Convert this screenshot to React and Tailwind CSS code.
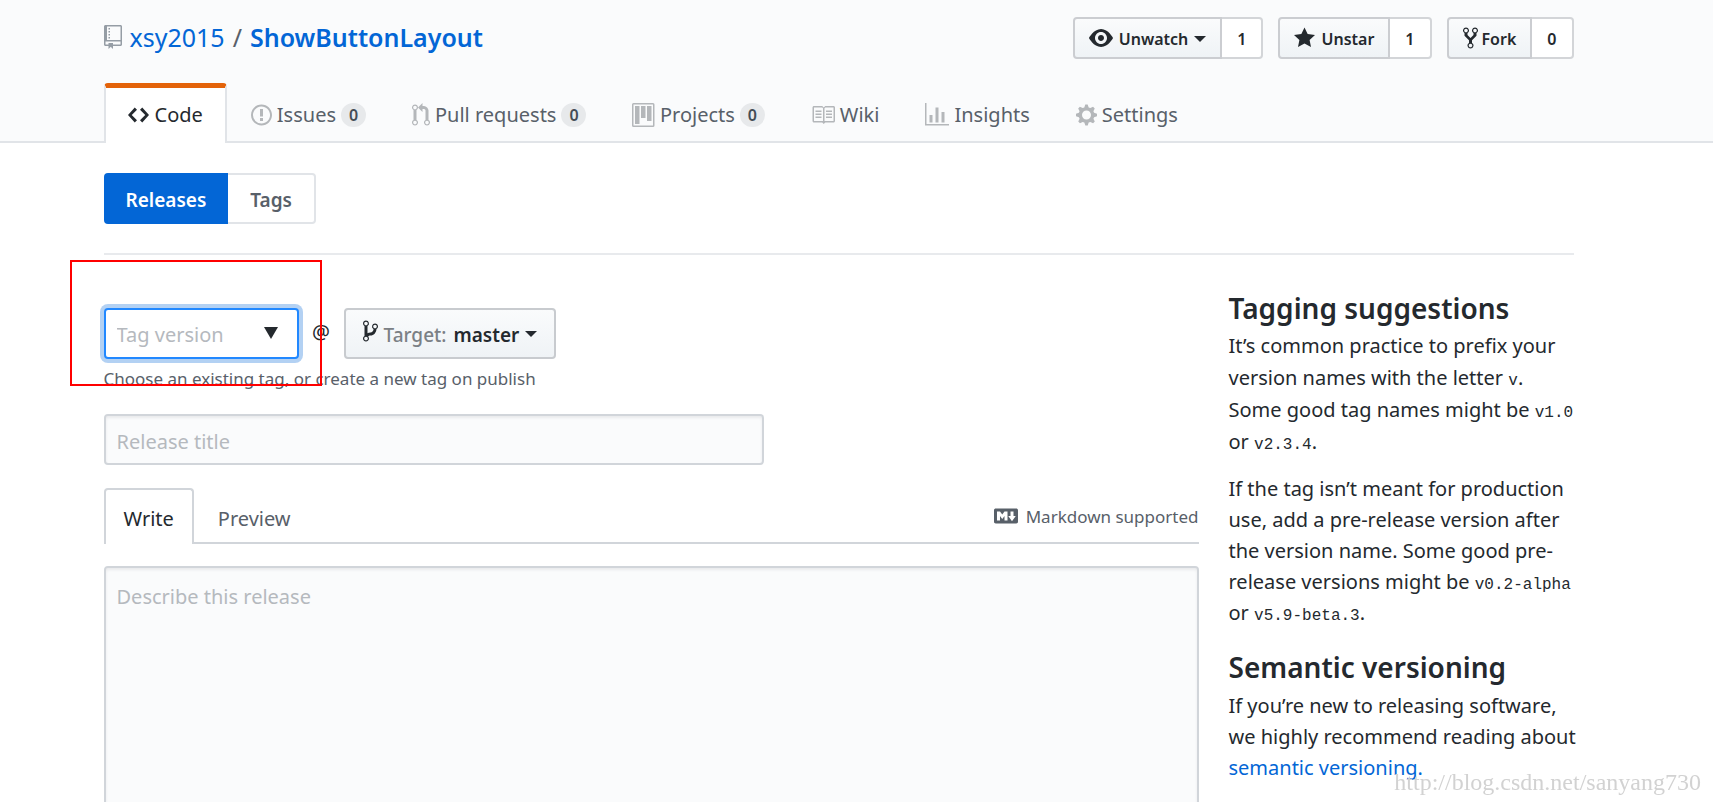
import React from "react";

const ICONS = {
  repo: [12, "M4 9H3V8h1v1zm0-3H3v1h1V6zm0-2H3v1h1V4zm0-2H3v1h1V2zm8-1v12c0 .55-.45 1-1 1H6v2l-1.5-1.5L3 16v-2H1c-.55 0-1-.45-1-1V1c0-.55.45-1 1-1h10c.55 0 1 .45 1 1zm-1 10H1v2h2v-1h3v1h5v-2zm0-10H2v9h9V1z"],
  eye: [16, "M8.06 2C3 2 0 8 0 8s3 6 8.06 6C13 14 16 8 16 8s-3-6-7.94-6zM8 12c-2.2 0-4-1.78-4-4 0-2.2 1.8-4 4-4 2.22 0 4 1.8 4 4 0 2.22-1.78 4-4 4zm2-4c0 1.11-.89 2-2 2-1.11 0-2-.89-2-2 0-1.11.89-2 2-2 1.11 0 2 .89 2 2z"],
  star: [14, "M14 6l-4.9-.64L7 1 4.9 5.36 0 6l3.6 3.26L2.67 14 7 11.67 11.33 14l-.93-4.74z"],
  fork: [10, "M8 1a1.993 1.993 0 0 0-1 3.72V6L5 8 3 6V4.72A1.993 1.993 0 0 0 2 1a1.993 1.993 0 0 0-1 3.72V6.5l3 3v1.78A1.993 1.993 0 0 0 5 15a1.993 1.993 0 0 0 1-3.72V9.5l3-3V4.72A1.993 1.993 0 0 0 8 1zM2 4.2C1.34 4.2.8 3.65.8 3c0-.65.55-1.2 1.2-1.2.65 0 1.2.55 1.2 1.2 0 .65-.55 1.2-1.2 1.2zm3 10c-.66 0-1.2-.55-1.2-1.2 0-.65.55-1.2 1.2-1.2.65 0 1.2.55 1.2 1.2 0 .65-.55 1.2-1.2 1.2zm3-10c-.66 0-1.2-.55-1.2-1.2 0-.65.55-1.2 1.2-1.2.65 0 1.2.55 1.2 1.2 0 .65-.55 1.2-1.2 1.2z"],
  code: [14, "M9.5 3L8 4.5 11.5 8 8 11.5 9.5 13 14 8 9.5 3zm-5 0L0 8l4.5 5L6 11.5 2.5 8 6 4.5 4.5 3z"],
  issue: [14, "M7 2.3c3.14 0 5.7 2.56 5.7 5.7s-2.56 5.7-5.7 5.7A5.71 5.71 0 0 1 1.3 8c0-3.14 2.56-5.7 5.7-5.7zM7 1C3.14 1 0 4.14 0 8s3.14 7 7 7 7-3.14 7-7-3.14-7-7-7zm1 3H6v5h2V4zm0 6H6v2h2v-2z"],
  pull: [12, "M11 11.28V5c-.03-.78-.34-1.47-.94-2.06C9.46 2.35 8.78 2.03 8 2H7V0L4 3l3 3V4h1c.27.02.48.11.69.31.21.2.3.42.31.69v6.28A1.993 1.993 0 0 0 10 15a1.993 1.993 0 0 0 1-3.72zm-1 2.92c-.66 0-1.2-.55-1.2-1.2 0-.65.55-1.2 1.2-1.2.65 0 1.2.55 1.2 1.2 0 .65-.55 1.2-1.2 1.2zM4 3c0-1.11-.89-2-2-2a1.993 1.993 0 0 0-1 3.72v6.56A1.993 1.993 0 0 0 2 15a1.993 1.993 0 0 0 1-3.72V4.72c.59-.34 1-.98 1-1.72zm-.8 10c0 .66-.55 1.2-1.2 1.2-.65 0-1.2-.55-1.2-1.2 0-.65.55-1.2 1.2-1.2.65 0 1.2.55 1.2 1.2zM2 4.2C1.34 4.2.8 3.65.8 3c0-.65.55-1.2 1.2-1.2.65 0 1.2.55 1.2 1.2 0 .65-.55 1.2-1.2 1.2z"],
  project: [15, "M10 12h3V2h-3v10zm-4-2h3V2H6v8zm-4 4h3V2H2v12zm-1 1h13V1H1v14zM14 0H1a1 1 0 0 0-1 1v14a1 1 0 0 0 1 1h13a1 1 0 0 0 1-1V1a1 1 0 0 0-1-1z"],
  book: [16, "M3 5h4v1H3V5zm0 3h4V7H3v1zm0 2h4V9H3v1zm11-5h-4v1h4V5zm0 2h-4v1h4V7zm0 2h-4v1h4V9zm2-6v9c0 .55-.45 1-1 1H9.5l-1 1-1-1H2c-.55 0-1-.45-1-1V3c0-.55.45-1 1-1h5.5l1 1 1-1H15c.55 0 1 .45 1 1zm-8 .5L7.5 3H2v9h6V3.5zm7-.5H9.5l-.5.5V12h6V3z"],
  graph: [16, "M16 14v1H0V0h1v14h15zM5 13H3V8h2v5zm4 0H7V3h2v10zm4 0h-2V6h2v7z"],
  gear: [14, "M14 8.77v-1.6l-1.94-.64-.45-1.09.88-1.84-1.13-1.13-1.81.91-1.09-.45-.69-1.92h-1.6l-.63 1.94-1.11.45-1.84-.88-1.13 1.13.91 1.81-.45 1.09L0 7.23v1.59l1.94.64.45 1.09-.88 1.84 1.13 1.13 1.81-.91 1.09.45.69 1.92h1.59l.63-1.94 1.11-.45 1.84.88 1.13-1.13-.92-1.81.47-1.09L14 8.75v.02zM7 11c-1.66 0-3-1.34-3-3s1.34-3 3-3 3 1.34 3 3-1.34 3-3 3z"],
  branch: [10, "M10 5c0-1.11-.89-2-2-2a1.993 1.993 0 0 0-1 3.72v.3c-.02.52-.23.98-.63 1.38-.4.4-.86.61-1.38.63-.83.02-1.48.16-2 .45V4.72a1.993 1.993 0 0 0-1-3.72C.88 1 0 1.89 0 3a2 2 0 0 0 1 1.72v6.56c-.59.35-1 .99-1 1.72 0 1.11.89 2 2 2 1.11 0 2-.89 2-2 0-.53-.2-1-.53-1.36.09-.06.48-.41.59-.47.25-.11.56-.17.94-.17 1.05-.05 1.95-.45 2.75-1.25S8.95 7.77 9 6.73h-.02C9.59 6.37 10 5.73 10 5zM2 1.8c.66 0 1.2.55 1.2 1.2 0 .65-.55 1.2-1.2 1.2C1.35 4.2.8 3.65.8 3c0-.65.55-1.2 1.2-1.2zm0 12.41c-.66 0-1.2-.55-1.2-1.2 0-.65.55-1.2 1.2-1.2.65 0 1.2.55 1.2 1.2 0 .65-.55 1.2-1.2 1.2zm6-8c-.66 0-1.2-.55-1.2-1.2 0-.65.55-1.2 1.2-1.2.65 0 1.2.55 1.2 1.2 0 .65-.55 1.2-1.2 1.2z"],
  markdown: [16, "M14.85 3H1.15C.52 3 0 3.52 0 4.15v7.69C0 12.48.52 13 1.15 13h13.69c.64 0 1.15-.52 1.15-1.15v-7.7C16 3.52 15.48 3 14.85 3zM9 11H7V8L5.5 9.92 4 8v3H2V5h2l1.5 2L7 5h2v6zm2.99.5L9.5 8H11V5h2v3h1.5l-2.51 3.5z"],
};

function Icon({ name, className = "" }) {
  const [w, d] = ICONS[name];
  return (
    <svg aria-hidden="true" viewBox={`0 0 ${w} 16`} width={w * 1.5} height="24" className={`shrink-0 fill-current ${className}`}>
      <path fillRule="evenodd" d={d} />
    </svg>
  );
}

function Caret() {
  return (
    <svg aria-hidden="true" viewBox="0 0 12 6" width="12" height="6" className="ml-1.5 shrink-0 fill-current">
      <path d="M0 0h12L6 6z" />
    </svg>
  );
}

function SocialButton({ icon, label, count, caret, tight }) {
  return (
    <div className="flex h-[42px] text-base font-semibold text-[#24292e]">
      <button
        type="button"
        className={`flex items-center rounded-l border-2 border-[#cbcdd1] bg-linear-to-b from-[#fafbfc] to-[#eff3f6] px-3.5 ${tight ? "gap-1" : "gap-1.5"}`}
      >
        <Icon name={icon} />
        <span className="flex items-center pt-0.5">
          {label}
          {caret && <Caret />}
        </span>
      </button>
      <a href="#count" className="flex items-center rounded-r border-2 border-l-0 border-[#d3d5d8] bg-white px-[15px] pt-0.5">
        {count}
      </a>
    </div>
  );
}

const TABS = [
  { icon: "issue", label: "Issues", count: 0 },
  { icon: "pull", label: "Pull requests", count: 0 },
  { icon: "project", label: "Projects", count: 0 },
  { icon: "book", label: "Wiki" },
  { icon: "graph", label: "Insights" },
  { icon: "gear", label: "Settings" },
];

function RepoHeader() {
  return (
    <header className="border-b-2 border-[#e1e4e8] bg-[#fafbfc] pr-9">
      <div className="mx-auto max-w-[1470px]">
        <div className="flex items-start justify-between pt-[17px]">
          <h1 className="flex items-center text-[25px] leading-10 text-[#586069]">
            <Icon name="repo" className="mr-2 text-[#959da5]" />
            <a href="#owner" className="text-[#0366d6]">xsy2015</a>
            <span className="mx-2">/</span>
            <a href="#repo" className="font-semibold text-[#0366d6]">ShowButtonLayout</a>
          </h1>
          <div className="flex gap-[15px]">
            <SocialButton icon="eye" label="Unwatch" count="1" caret />
            <SocialButton icon="star" label="Unstar" count="1" />
            <SocialButton icon="fork" label="Fork" count="0" tight />
          </div>
        </div>
        <nav aria-label="Repository" className="-mb-0.5 mt-6 flex h-[60px] text-xl text-[#586069]">
          <a
            href="#code"
            className="flex items-center gap-1.5 rounded-t border-x-2 border-t-[5px] border-x-[#e1e4e8] border-t-[#e36209] bg-white px-[22px] pb-0.5 text-[#24292e]"
          >
            <Icon name="code" />
            Code
          </a>
          <div className="flex items-center gap-[46px] pl-6 pt-1">
            {TABS.map((t) => (
              <a key={t.label} href={`#${t.icon}`} className="flex items-center gap-[5px]">
                <Icon name={t.icon} className="text-[#b4b7ba]" />
                {t.label}
                {t.count !== undefined && (
                  <span className="flex h-6 w-[25px] items-center justify-center rounded-full bg-[#e7e9eb] text-base font-semibold text-[#444d56]">
                    {t.count}
                  </span>
                )}
              </a>
            ))}
          </div>
        </nav>
      </div>
    </header>
  );
}

function ReleaseForm() {
  return (
    <form className="relative min-w-0 flex-1">
      <div className="flex items-center">
        <div className="relative w-[195px]">
          <input
            aria-label="Tag version"
            placeholder="Tag version"
            className="block h-[51px] w-full rounded border-2 border-[#2188ff] bg-white pl-[11px] pr-10 pt-0.5 text-xl shadow-[0_0_0_4px_rgba(3,102,214,0.3)] outline-none placeholder:text-[#b5b9be]"
          />
          <svg aria-hidden="true" viewBox="0 0 14 12" width="14" height="12" className="absolute right-[21px] top-[19px] fill-[#24292e]">
            <path d="M0 0h14L7 12z" />
          </svg>
        </div>
        <span className="w-[45px] pb-1 text-center text-xl">@</span>
        <button
          type="button"
          className="flex h-[51px] items-center rounded border-2 border-[#c8cbcf] bg-linear-to-b from-[#fafbfc] to-[#eff3f6] px-[17px] text-[19px] font-semibold"
        >
          <Icon name="branch" className="mb-1.5 mr-1.5" />
          <span className="mr-[7px] pt-1 font-medium text-[#7b8085]">Target:</span>
          <span className="pt-1">master</span>
          <Caret />
        </button>
      </div>
      <p className="mt-1.5 text-[17px] leading-[27px] text-[#586069]">
        Choose an existing tag, or create a new tag on publish
      </p>
      <div aria-hidden="true" className="pointer-events-none absolute -left-[34px] -top-12 h-[126px] w-[252px] border-2 border-[#ff0000]" />
      <input
        aria-label="Release title"
        placeholder="Release title"
        className="mt-[22px] block h-[51px] w-[660px] max-w-full rounded border-2 border-[#d1d5da] bg-[#fafbfc] px-[11px] pt-1 text-xl shadow-[inset_0_2px_3px_rgba(27,31,35,0.075)] placeholder:text-[#b5b9be]"
      />
      <div className="mt-[23px] flex h-14 items-stretch border-b-2 border-[#d1d5da] text-xl">
        <button type="button" className="-mb-0.5 rounded-t border-2 border-b-0 border-[#d1d5da] bg-white px-[18px] pt-1 text-[#24292e]">
          Write
        </button>
        <button type="button" className="px-6 pt-2 text-[#586069]">Preview</button>
        <a href="#markdown" className="ml-auto flex items-center gap-2 pt-0.5 text-[17px] text-[#586069]">
          <Icon name="markdown" />
          <span className="pt-0.5">Markdown supported</span>
        </a>
      </div>
      <textarea
        aria-label="Describe this release"
        placeholder="Describe this release"
        className="mt-[22px] block h-[300px] w-full resize-none rounded border-2 border-[#d1d5da] bg-[#fafbfc] px-[11px] py-[15px] text-xl shadow-[inset_0_2px_3px_rgba(27,31,35,0.075)] placeholder:text-[#b5b9be]"
      />
    </form>
  );
}

function Code({ children }) {
  return <code className="font-['Liberation_Mono',monospace] text-base leading-none">{children}</code>;
}

function Sidebar() {
  return (
    <aside className="w-[345px] shrink-0 text-xl leading-[31px] text-[#24292e]">
      <h2 className="-mt-[21px] text-[28px] font-semibold leading-[42px]">Tagging suggestions</h2>
      <p className="pt-px leading-8">
        It’s common practice to prefix your version names with the letter <Code>v</Code>.
        <br />
        Some good tag names might be <Code>v1.0</Code> or <Code>v2.3.4</Code>.
      </p>
      <p className="mt-[15px]">
        If the tag isn’t meant for production use, add a pre-release version after the version name. Some good
        pre-release versions might be <Code>v0.2-alpha</Code> or <Code>v5.9-beta.3</Code>.
      </p>
      <h2 className="mt-[18px] text-[28px] font-semibold leading-[42px]">Semantic versioning</h2>
      <p className="-mr-2 pt-0.5">
        If you’re new to releasing software, we highly recommend reading about{" "}
        <a href="#semver" className="text-[#0366d6]">semantic versioning.</a>
      </p>
    </aside>
  );
}

export default function App() {
  return (
    <div className="min-h-screen bg-white font-['Noto_Sans',sans-serif] text-[#24292e]">
      <RepoHeader />
      <main className="pr-9">
        <div className="mx-auto max-w-[1470px]">
          <nav aria-label="Releases and tags" className="flex pt-[30px] text-[19px] font-semibold">
            <a href="#releases" className="flex h-[51px] items-center rounded-l bg-[#0366d6] px-[22px] pt-1 text-white">Releases</a>
            <a href="#tags" className="flex h-[51px] items-center rounded-r border-2 border-l-0 border-[#e1e4e8] px-[22px] pt-1 text-[#586069]">Tags</a>
          </nav>
          <hr className="mt-[29px] border-t-2 border-[#e8eaed]" />
          <div className="flex items-start gap-[30px] pt-[53px]">
            <ReleaseForm />
            <Sidebar />
          </div>
        </div>
      </main>
      <div className="pointer-events-none fixed bottom-2 right-3 font-['Liberation_Serif',serif] text-2xl leading-6 text-[#d2d2d2]">
        http://blog.csdn.net/sanyang730
      </div>
    </div>
  );
}
